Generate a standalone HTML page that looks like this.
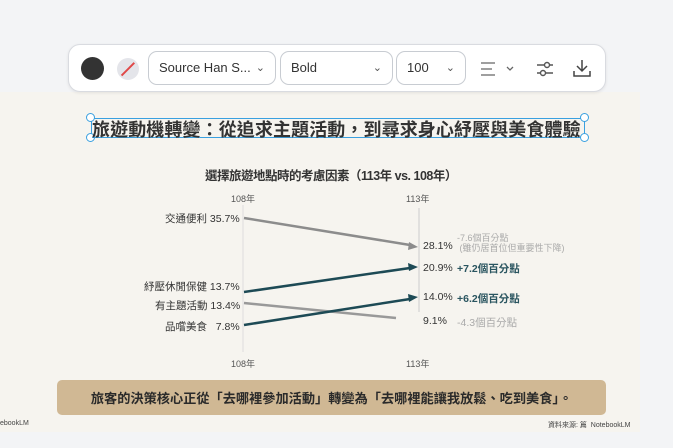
<!DOCTYPE html>
<html><head><meta charset="utf-8"><style>
*{margin:0;padding:0;box-sizing:border-box}
body{width:673px;height:448px;background:#f3f4f6;position:relative;overflow:hidden;font-family:"Liberation Sans","Noto Sans CJK TC",sans-serif}
.slide{position:absolute;left:0;top:92px;width:640px;height:340px;background:#f6f4ef}
.a{position:absolute;white-space:nowrap}
.bar{position:absolute;left:68px;top:44px;width:538px;height:48px;background:#fff;border:1px solid #d9dbe0;border-radius:12px;box-shadow:0 1px 3px rgba(0,0,0,.08)}
.sel{position:absolute;border:1px solid #c8ccd2;border-radius:9px;height:34px;top:6px;font-size:13px;color:#333;padding:0 10px;line-height:32px}
.cv{position:absolute;right:10px;top:0;font-size:11px;color:#555}
.h{position:absolute;width:9px;height:9px;border:1.5px solid #3aa0e0;border-radius:50%;background:#fff}
</style></head><body>
<div class="slide"></div>
<div class="bar">
 <div style="position:absolute;left:12px;top:12px;width:23px;height:23px;border-radius:50%;background:#333"></div>
 <div style="position:absolute;left:48px;top:13px;width:22px;height:22px;border-radius:50%;background:#e4e5ea;overflow:hidden"><div style="position:absolute;left:10px;top:2px;width:1.5px;height:18px;background:#e04848;transform:rotate(45deg)"></div></div>
 <div class="sel" style="left:79px;width:128px">Source Han S...<span class="cv">&#8964;</span></div>
 <div class="sel" style="left:211px;width:113px">Bold<span class="cv">&#8964;</span></div>
 <div class="sel" style="left:327px;width:70px">100<span class="cv">&#8964;</span></div>
 <svg style="position:absolute;left:410px;top:15px" width="40" height="18"><g stroke="#666" stroke-width="1.3" fill="none"><path d="M2 3h14M2 9h11M2 15h14"/><path d="M28 7l3 3 3-3"/></g></svg>
 <svg style="position:absolute;left:466px;top:14px" width="20" height="20"><g stroke="#555" stroke-width="1.4" fill="none"><path d="M2 6h16M2 14h16"/><circle cx="12" cy="6" r="2.5" fill="#fff"/><circle cx="8" cy="14" r="2.5" fill="#fff"/></g></svg>
 <svg style="position:absolute;left:503px;top:13px" width="20" height="20"><g stroke="#444" stroke-width="1.5" fill="none"><path d="M10 2v11M5 8l5 5 5-5M2 13v5h16v-5"/></g></svg>
</div>
<div style="position:absolute;left:91px;top:118px;width:494px;height:20px;border:1.5px solid #3aa0e0"></div>
<div class="h" style="left:86px;top:113px"></div><div class="h" style="left:580px;top:113px"></div>
<div class="h" style="left:86px;top:133px"></div><div class="h" style="left:580px;top:133px"></div>
<div class="a" style="left:92px;top:116px;font-size:18px;font-weight:bold;color:#333;letter-spacing:0.1px;text-decoration:underline;text-decoration-color:#3aa0e0">旅遊動機轉變：從追求主題活動，到尋求身心紓壓與美食體驗</div>
<div class="a" style="left:205px;top:165px;font-size:12.5px;font-weight:bold;color:#333;letter-spacing:-0.5px">選擇旅遊地點時的考慮因素（113年 vs. 108年）</div>
<div class="a" style="left:231px;top:192px;font-size:9px;color:#555">108年</div>
<div class="a" style="left:406px;top:192px;font-size:9px;color:#555">113年</div>
<div class="a" style="left:231px;top:357px;font-size:9px;color:#555">108年</div>
<div class="a" style="left:406px;top:357px;font-size:9px;color:#555">113年</div>
<svg style="position:absolute;left:0;top:0" width="673" height="448">
 <line x1="243" y1="205" x2="243" y2="352" stroke="#ddd" stroke-width="1"/>
 <line x1="419" y1="208" x2="419" y2="312" stroke="#ccc" stroke-width="1"/>
 <line x1="244" y1="218" x2="410" y2="245" stroke="#8c8c8c" stroke-width="2.5"/>
 <path d="M418 247l-10 3 1-8z" fill="#8c8c8c"/>
 <line x1="244" y1="303" x2="396" y2="318" stroke="#999" stroke-width="2.5"/>
 <line x1="244" y1="292" x2="410" y2="268" stroke="#1d4a55" stroke-width="2.5"/>
 <path d="M418 267l-9 4-1-8z" fill="#1d4a55"/>
 <line x1="244" y1="325" x2="410" y2="299" stroke="#1d4a55" stroke-width="2.5"/>
 <path d="M418 297l-9 5-1-8z" fill="#1d4a55"/>
</svg>
<div class="a" style="left:165px;top:211px;font-size:10.5px;color:#333">交通便利 35.7%</div>
<div class="a" style="left:144px;top:279px;font-size:10.5px;color:#333">紓壓休閒保健 13.7%</div>
<div class="a" style="left:155px;top:298px;font-size:10.5px;color:#333">有主題活動 13.4%</div>
<div class="a" style="left:165px;top:319px;font-size:10.5px;color:#333">品嚐美食&nbsp;&nbsp;&nbsp;7.8%</div>
<div class="a" style="left:423px;top:240px;font-size:10.5px;color:#333">28.1%</div>
<div class="a" style="left:423px;top:262px;font-size:10.5px;color:#333">20.9%</div>
<div class="a" style="left:423px;top:291px;font-size:10.5px;color:#333">14.0%</div>
<div class="a" style="left:423px;top:315px;font-size:10.5px;color:#333">9.1%</div>
<div class="a" style="left:457px;top:233px;font-size:9px;color:#aaa;line-height:10px">-7.6個百分點<br>&nbsp;(雖仍居首位但重要性下降)</div>
<div class="a" style="left:457px;top:261px;font-size:10.5px;font-weight:bold;color:#2a5560">+7.2個百分點</div>
<div class="a" style="left:457px;top:291px;font-size:10.5px;font-weight:bold;color:#2a5560">+6.2個百分點</div>
<div class="a" style="left:457px;top:315px;font-size:10.5px;color:#aaa">-4.3個百分點</div>
<div style="position:absolute;left:57px;top:380px;width:549px;height:35px;background:#d0b894;border-radius:5px"></div>
<div class="a" style="left:57px;top:388px;width:549px;text-align:center;font-size:13.2px;font-weight:bold;color:#2a2a2a">旅客的決策核心正從「去哪裡參加活動」轉變為「去哪裡能讓我放鬆、吃到美食」。</div>
<div class="a" style="left:548px;top:420px;font-size:7px;color:#444">資料來源: 篇 &nbsp;NotebookLM</div>
<div class="a" style="left:0;top:420px;font-size:7px;color:#444">ebookLM</div>
</body></html>
